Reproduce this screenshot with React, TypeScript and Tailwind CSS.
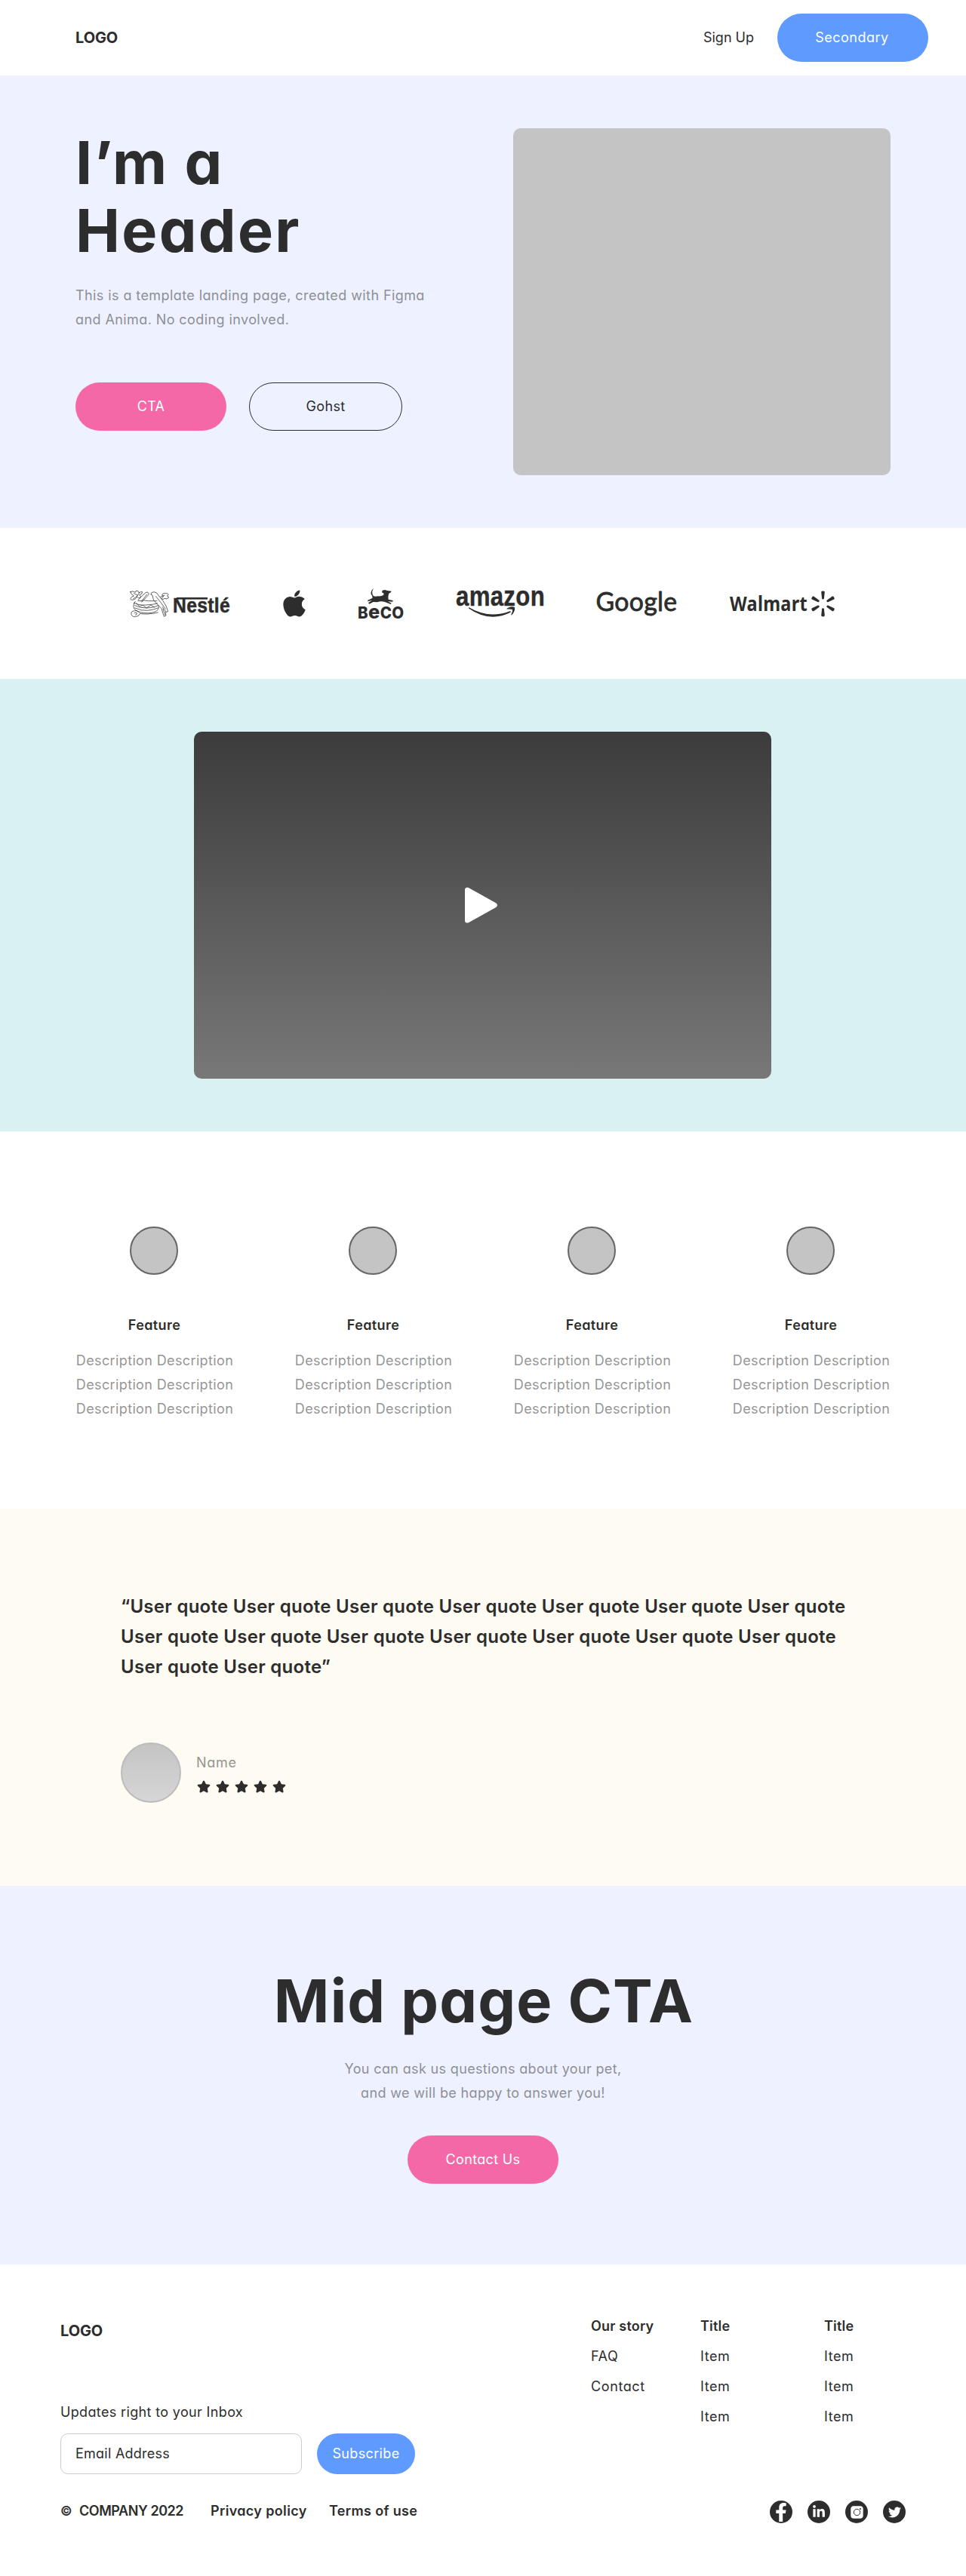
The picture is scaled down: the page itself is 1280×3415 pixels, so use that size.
import type { ReactNode } from "react";
import { FaApple, FaFacebookF, FaLinkedinIn, FaStar, FaTwitter } from "react-icons/fa";

const INK = "#2d2d2d";

function NestleLogo() {
  return (
    <svg width="133" height="40" viewBox="0 0 133 40" fill={INK} className="shrink-0 overflow-visible">
      <g
        transform="scale(0.3333) translate(-66 -60)"
        fill="none"
        stroke={INK}
        strokeWidth="2.2"
        strokeLinejoin="round"
        strokeLinecap="round"
      >
        <path d="M68 74q8-6 20 2q0-8 8-6q8 2 6 8q8-6 14-4q0 10-12 12q8 4 4 12q-8 4-14-6q-2 12-18 14q-6 0-8-4q4-10 14-12q-10-4-14-16z" />
        <path d="M82 80l16 8M104 78l-10 14M80 102l14-10M88 112l-6 8M98 108l10-12l20-18q4-4 10-2q6 4 2 10l-26 28M112 112l22-28" />
        <path d="M84 118q-8 16 2 26q12 12 40 14q30 2 46-8q12-8 8-22M84 118q18 10 48 8t44-6M86 128q22 12 50 10t42-10M86 138q26 12 50 10t42-10M92 120l14 12l12-5l14 11l18-11l14 8M100 110q24-5 40 0l34 0" />
        <path d="M78 150q-10 4-6 14q6 12 20 8q12-2 14-12q30 6 72-4M80 150q14-6 24 4M84 158q6-4 10 0q2 6-6 8" />
        <path d="M150 84q0-10 12-10q14 2 18 14l18 22q14 18 20 42l-8 2l-14-20M150 84l6 4q0 20 18 34l18 18l6 20l4 12l8-4l-2-14M170 92q20 24 38 50M198 142l8 24" />
        <path d="M194 86q2-8 12-6q10-2 14 4l-6 6q8 2 6 8q-8 6-16 2q-6 8-12 0q4-6 8-8zM188 94l16-6" />
      </g>
      <text x="57" y="32" fontSize="27" fontWeight="700" fontFamily="Liberation Sans" stroke={INK} strokeWidth="0.5" textLength="76" lengthAdjust="spacingAndGlyphs">
        Nestlé
      </text>
      <rect x="62" y="12" width="41" height="2.6" />
    </svg>
  );
}

function BecoLogo() {
  return (
    <svg width="60" height="44" viewBox="0 -2 60 44" fill={INK} className="shrink-0 overflow-visible">
      <g transform="scale(0.3333) translate(-75 -60)">
        <path d="M134 60L132 67Q126 78 134 90Q142 94 152 91Q166 92 174 87L176 80L168 76L170 68L180 66L190 69L206 71L204 76L196 80L193 92L194 104L212 108L211 113L192 112L206 119L203 123L182 115Q165 108 150 115L134 114L118 122L114 118L128 108L112 112L112 107L130 99Q132 94 128 88Q118 76 134 60Z" />
      </g>
      <text x="-1" y="40" fontWeight="800" fontFamily="Inter" textLength="61.500" lengthAdjust="spacingAndGlyphs">
        <tspan fontSize="21">B</tspan>
        <tspan fontSize="26">e</tspan>
        <tspan fontSize="21">CO</tspan>
      </text>
    </svg>
  );
}

function AmazonLogo() {
  return (
    <svg width="116" height="40" viewBox="0 0 116 40" fill={INK} className="shrink-0 overflow-visible">
      <text x="-1" y="23" fontSize="37" fontWeight="700" fontFamily="Liberation Sans" stroke={INK} strokeWidth="0.4" textLength="118" lengthAdjust="spacingAndGlyphs">
        amazon
      </text>
      <path d="M16.5 25.3Q43 41 70.500 30.200Q72.500 30 71.500 31.800Q44 46 16 26.500Q15.500 25.200 16.500 25.300Z" />
      <path d="M66.500 26.800Q72 22.800 77 25.200Q78 30 73 35.400Q72 35.800 72.400 34.600Q74.700 29.500 74 28Q71.500 27 67 27.600Q65.800 27.500 66.500 26.800Z" />
    </svg>
  );
}

function GoogleLogo() {
  return (
    <svg width="106" height="40" viewBox="0 0 106 40" fill={INK} className="shrink-0 overflow-visible">
      <text x="-1.500" y="30" fontSize="35.500" fontWeight="400" fontFamily="Lato" stroke={INK} strokeWidth="0.8" textLength="108" lengthAdjust="spacingAndGlyphs">
        Google
      </text>
    </svg>
  );
}

function WalmartLogo() {
  return (
    <svg width="139" height="40" viewBox="0 0 139 40" fill={INK} className="shrink-0 overflow-visible">
      <text x="0" y="30" fontSize="26.500" fontWeight="700" fontFamily="Noto Sans" textLength="103" lengthAdjust="spacingAndGlyphs">
        Walmart
      </text>
      {[0, 60, 120, 180, 240, 300].map((a) => (
        <path
          key={a}
          transform={`rotate(${a} 123.500 20.400)`}
          d="M121.200 4.800Q121.200 3.400 123.500 3.400Q125.800 3.400 125.800 4.800L124.900 13.600Q124.700 14.600 123.500 14.600Q122.300 14.600 122.100 13.600Z"
        />
      ))}
    </svg>
  );
}

function Pill({ className, children }: { className: string; children: ReactNode }) {
  return (
    <button className={`flex h-16 items-center justify-center rounded-[32px] ${className}`}>{children}</button>
  );
}

function Feature() {
  return (
    <div className="flex flex-col items-center text-center">
      <div className="size-16 rounded-full border-2 border-[#666] bg-[#c4c4c4]" />
      <h3 className="mt-[51px] pl-px font-semibold tracking-[0.4px]">Feature</h3>
      <p className="mt-[15px] pl-[2px] tracking-[0.37px] whitespace-nowrap opacity-50">
        Description Description
        <br />
        Description Description
        <br />
        Description Description
      </p>
    </div>
  );
}

function LinkColumn({ title, items }: { title: string; items: string[] }) {
  return (
    <div className="flex flex-col leading-10">
      <span className="font-semibold tracking-[0.2px]">{title}</span>
      {items.map((item, i) => (
        <a key={i} className="tracking-[0.6px]">{item}</a>
      ))}
    </div>
  );
}

function Social({ children }: { children: ReactNode }) {
  return (
    <a className="flex size-[30px] items-center justify-center rounded-full bg-[#2d2d2d] text-white">{children}</a>
  );
}

export default function App() {
  return (
    <div className="w-[1280px] bg-white font-['Inter',sans-serif] text-[18px] leading-8 tracking-[0.35px] text-[#2d2d2d] [font-feature-settings:'cv11']">
      <header className="flex h-[100px] items-center pr-[50px] pl-[100px]">
        <span className="text-[20px] font-bold tracking-[-0.1px]">LOGO</span>
        <a className="mr-[31px] ml-auto pb-px tracking-normal">Sign Up</a>
        <Pill className="w-[200px] bg-[#5e9aff] pr-[2px] pb-px tracking-[0.5px] text-white">Secondary</Pill>
      </header>

      <section className="flex h-[600px] justify-between bg-[#eef1ff] px-[100px] pt-[70px]">
        <div>
          <h1 className="text-[79px] leading-[90px] font-bold tracking-[2.300px]">
            I’m a
            <br />
            Header
          </h1>
          <p className="mt-[26px] tracking-[0.41px] whitespace-nowrap opacity-50">
            This is a template landing page, created with Figma
            <br />
            and Anima. No coding involved.
          </p>
          <div className="mt-[67px] flex gap-[30px]">
            <Pill className="w-[200px] bg-[#f468a8] text-white">CTA</Pill>
            <Pill className="w-[203px] border border-[#2d2d2d]">Gohst</Pill>
          </div>
        </div>
        <div className="h-[460px] w-[500px] rounded-[10px] bg-[#c4c4c4]" />
      </section>

      <section className="flex h-[200px] items-center justify-center gap-[70px] pr-[2px]">
        <NestleLogo />
        <div className="flex w-[30px] shrink-0 justify-center">
          <FaApple className="h-[40px] w-[30px] shrink-0" preserveAspectRatio="none" />
        </div>
        <BecoLogo />
        <AmazonLogo />
        <GoogleLogo />
        <WalmartLogo />
      </section>

      <section className="flex h-[600px] items-center justify-center bg-[#d9f1f2] pr-px">
        <div className="flex h-[460px] w-[765px] items-center justify-center rounded-[10px] bg-linear-to-b from-[#3c3c3c] to-[#787878] pr-[3px]">
          <svg width="46" height="48" viewBox="0 0 46 48" fill="white">
            <path d="M1 4Q1 0.500 4 0.500Q5.500 0.500 7 1.600L41.500 20.800Q44 22.300 44 24Q44 25.700 41.500 27.200L7 46.400Q5.500 47.500 4 47.500Q1 47.500 1 44Z" />
          </svg>
        </div>
      </section>

      <section className="grid h-[500px] grid-cols-[208px_208px_208px_208px] gap-[82px] pt-[126px] pl-[100px]">
        <Feature />
        <Feature />
        <Feature />
        <Feature />
      </section>

      <section className="h-[500px] bg-[#fefbf3] px-[160px] pt-[110px]">
        <blockquote className="text-[24px] leading-10 font-semibold tracking-[0.27px] whitespace-nowrap">
          “User quote User quote User quote User quote User quote User quote User quote
          <br />
          User quote User quote User quote User quote User quote User quote User quote
          <br />
          User quote User quote”
        </blockquote>
        <div className="mt-[80px] flex gap-5">
          <div className="size-20 rounded-full border-2 border-[#bcbcbc] bg-linear-to-b from-[#c4c4c4] to-[#d6d6d6]" />
          <div className="pt-[11px]">
            <p className="tracking-[0.7px] opacity-50">Name</p>
            <div className="mt-[7px] flex gap-[7px] pl-px">
              {[0, 1, 2, 3, 4].map((n) => (
                <FaStar key={n} className="h-[17px] w-[18px]" />
              ))}
            </div>
          </div>
        </div>
      </section>

      <section className="flex h-[502px] flex-col items-center bg-[#eef1ff] pt-[107px] text-center">
        <h2 className="pl-[2px] text-[79px] leading-[90px] font-bold tracking-[1.200px]">Mid page CTA</h2>
        <p className="mt-[30px] opacity-50">
          You can ask us questions about your pet,
          <br />
          and we will be happy to answer you!
        </p>
        <Pill className="mt-[40px] w-[200px] bg-[#f468a8] text-white">Contact Us</Pill>
      </section>

      <footer className="h-[413px] px-20">
        <div className="flex">
          <div className="w-[703px] pt-[72px]">
            <div className="text-[20px] font-bold tracking-[-0.1px]">LOGO</div>
            <p className="mt-[76px]">Updates right to your Inbox</p>
            <div className="mt-[12px] flex gap-5">
              <div className="flex h-[54px] w-[320px] items-center rounded-[10px] border border-[#ccc] pl-[19px] tracking-[0.25px]">
                Email Address
              </div>
              <button className="h-[54px] w-[130px] rounded-[27px] bg-[#5e9aff] text-white">Subscribe</button>
            </div>
          </div>
          <nav className="grid grid-cols-[145px_164px_auto] pt-[62px]">
            <LinkColumn title="Our story" items={["FAQ", "Contact"]} />
            <LinkColumn title="Title" items={["Item", "Item", "Item"]} />
            <LinkColumn title="Title" items={["Item", "Item", "Item"]} />
          </nav>
        </div>
        <div className="mt-[35px] flex h-[30px] items-center">
          <div className="flex pb-[2px] font-semibold">
            <span className="w-[25px] text-[17px]">©</span>
            <span className="w-[174px] tracking-[-0.450px]">COMPANY 2022</span>
            <span className="w-[157px]">Privacy policy</span>
            <span>Terms of use</span>
          </div>
          <div className="ml-auto flex gap-5">
            <Social>
              <FaFacebookF className="mt-px h-[25px] w-[16px]" />
            </Social>
            <Social>
              <FaLinkedinIn className="size-[18px]" />
            </Social>
            <Social>
              <svg width="17" height="17" viewBox="0 0 17 17">
                <rect x="0.300" y="0.300" width="16.400" height="16.400" rx="4" fill="white" />
                <circle cx="8.500" cy="8.500" r="4.200" fill="none" stroke={INK} strokeWidth="1" />
                <circle cx="13" cy="4" r="1" fill={INK} />
              </svg>
            </Social>
            <Social>
              <FaTwitter className="size-[17px]" />
            </Social>
          </div>
        </div>
      </footer>
    </div>
  );
}
